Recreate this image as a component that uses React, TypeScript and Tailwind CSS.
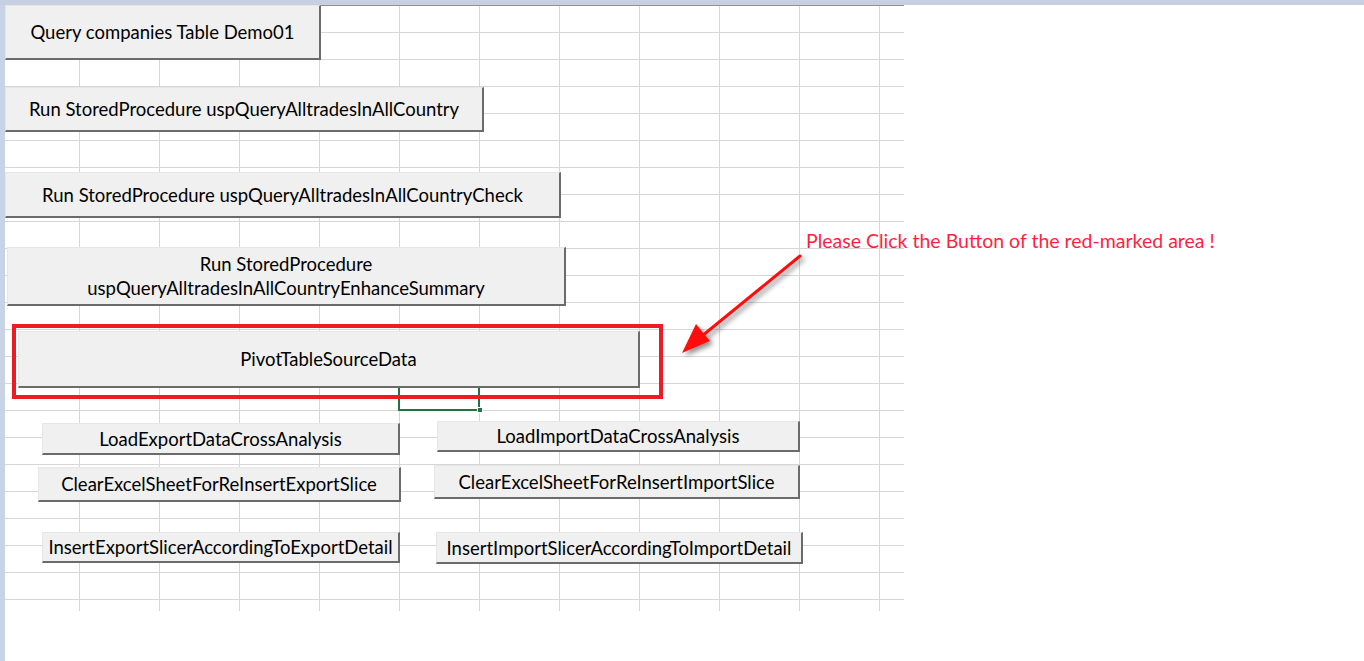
import type { ReactNode } from 'react';

const font = { fontFamily: 'Lato, "Open Sans", "Liberation Sans", sans-serif' };

type SheetButtonProps = {
  className: string;
  children: ReactNode;
};

// Excel form-control button, placed on the worksheet canvas
function SheetButton({ className, children }: SheetButtonProps) {
  return (
    <div
      className={`absolute flex flex-col items-center justify-center bg-[#f0f0f0] border-t border-l border-t-[#e6e6e6] border-l-[#e6e6e6] border-r-2 border-b-2 border-r-[#6b6b6b] border-b-[#6b6b6b] text-[18.5px] leading-[24px] text-black whitespace-nowrap ${className}`}
    >
      {children}
    </div>
  );
}

function Arrow() {
  return (
    <svg className="absolute left-[667px] top-[243px]" width="140" height="115" viewBox="0 0 140 115">
      <defs>
        <filter id="sh" x="-20%" y="-20%" width="150%" height="150%">
          <feDropShadow dx="3" dy="3" stdDeviation="2.5" floodColor="#000" floodOpacity="0.45" />
        </filter>
      </defs>
      <g filter="url(#sh)">
        <line x1="128" y1="8" x2="30" y2="88" stroke="#ff0d0d" strokeWidth="3" strokeLinecap="round" />
        <polygon points="10,105 24,76 38,93" fill="#ff0d0d" />
      </g>
    </svg>
  );
}

export default function App() {
  return (
    <div className="w-[1364px] h-[661px] bg-white overflow-hidden flex flex-col" style={font}>
      <div className="h-[5px] bg-[#c6d0e2] shrink-0" />
      <div className="flex flex-1">
        <div className="w-[5px] bg-[#c9d3e6] shrink-0" />
        <div className="relative flex-1">
          {/* worksheet grid */}
          <div className="w-[899px] h-[600px] border-t border-t-[#8f8f8f] bg-[linear-gradient(to_right,#d6d6d6_1px,transparent_1px),linear-gradient(to_bottom,#d6d6d6_1px,transparent_1px)] bg-[size:80px_100%,100%_27px] bg-[position:74px_0,0_26px] bg-repeat" />
          <div className="w-[899px] h-[6px] bg-[linear-gradient(to_right,#d6d6d6_1px,transparent_1px)] bg-[size:80px_100%] bg-[position:74px_0]" />

          {/* active cell selection */}
          <div className="absolute left-[393px] top-[373px] w-[82px] h-[33px] border-2 border-[#217346]" />
          <div className="absolute left-[472px] top-[402px] w-[6px] h-[6px] bg-[#217346] border border-white" />

          <SheetButton className="left-0 top-0 w-[316px] h-[55px]">Query companies Table Demo01</SheetButton>
          <SheetButton className="left-0 top-[82px] w-[479px] h-[45px]">
            Run StoredProcedure uspQueryAlltradesInAllCountry
          </SheetButton>
          <SheetButton className="left-0 top-[167px] w-[556px] h-[46px]">
            Run StoredProcedure uspQueryAlltradesInAllCountryCheck
          </SheetButton>
          <SheetButton className="left-[2px] top-[242px] w-[559px] h-[59px]">
            <span>Run StoredProcedure</span>
            <span>uspQueryAlltradesInAllCountryEnhanceSummary</span>
          </SheetButton>
          <SheetButton className="left-[13px] top-[326px] w-[622px] h-[57px]">PivotTableSourceData</SheetButton>

          {/* red highlight box */}
          <div className="absolute left-[7px] top-[319px] w-[651px] h-[75px] border-4 border-[#ed1c24]" />

          <SheetButton className="left-[37px] top-[418px] w-[358px] h-[32px]">LoadExportDataCrossAnalysis</SheetButton>
          <SheetButton className="left-[33px] top-[462px] w-[363px] h-[35px]">
            ClearExcelSheetForReInsertExportSlice
          </SheetButton>
          <SheetButton className="left-[37px] top-[527px] w-[358px] h-[31px]">
            InsertExportSlicerAccordingToExportDetail
          </SheetButton>
          <SheetButton className="left-[432px] top-[416px] w-[363px] h-[31px]">LoadImportDataCrossAnalysis</SheetButton>
          <SheetButton className="left-[429px] top-[460px] w-[366px] h-[34px]">
            ClearExcelSheetForReInsertImportSlice
          </SheetButton>
          <SheetButton className="left-[431px] top-[527px] w-[367px] h-[32px]">
            InsertImportSlicerAccordingToImportDetail
          </SheetButton>

          <div className="absolute left-[801px] top-[223px] text-[19.5px] leading-[26px] text-[#ff1f3d] whitespace-nowrap">
            Please Click the Button of the red-marked area !
          </div>
          <Arrow />
        </div>
      </div>
    </div>
  );
}
